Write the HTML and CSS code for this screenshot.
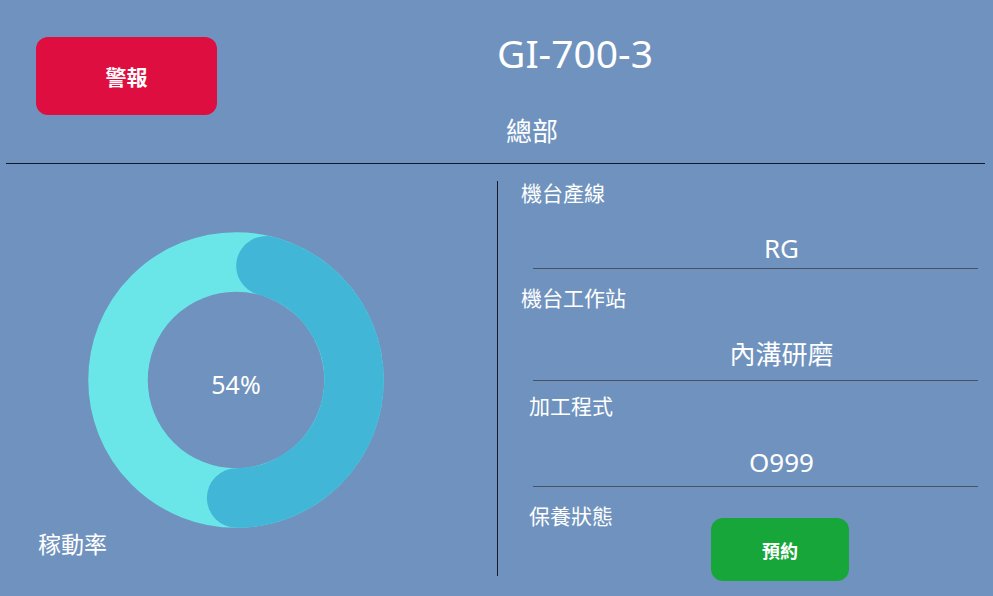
FILE: index.html
```html
<!DOCTYPE html>
<html lang="zh-Hant">
<head>
    <meta charset="UTF-8">
    <meta name="viewport" content="width=device-width, initial-scale=1.0">
    <title>GI-700-3</title>
    <link rel="stylesheet" href="styles.css">
</head>
<body>

<div id="machineCard">
    <!-- Header: alarm button + machine name -->
    <div class="card-header">
        <button type="button" class="alarm-btn">警報</button>
        <div class="title-block">
            <div class="machine-name">GI-700-3</div>
            <div class="machine-site">總部</div>
        </div>
    </div>

    <div class="card-body">
        <!-- Utilization donut -->
        <div class="util-panel">
            <div class="donut">
                <svg width="296" height="296" viewBox="0 0 296 296">
                    <circle cx="148" cy="148" r="118" fill="none" stroke="#6be6e8" stroke-width="59.5"/>
                    <path d="M177.95 33.86 A118 118 0 0 1 148.62 266" fill="none" stroke="#41b6d6" stroke-width="59.5" stroke-linecap="round"/>
                </svg>
                <span class="donut-value">54%</span>
            </div>
            <div class="util-label">稼動率</div>
        </div>

        <!-- Machine info -->
        <div class="info-panel">
            <div class="field field-line">
                <div class="field-label">機台產線</div>
                <div class="field-value">RG</div>
            </div>
            <div class="field field-station">
                <div class="field-label">機台工作站</div>
                <div class="field-value">內溝研磨</div>
            </div>
            <div class="field field-program">
                <div class="field-label">加工程式</div>
                <div class="field-value">O999</div>
            </div>
            <div class="field field-maint">
                <div class="field-label">保養狀態</div>
                <button type="button" class="book-btn">預約</button>
            </div>
        </div>
    </div>
</div>

</body>
</html>
```

FILE: styles.css
```css
body {
    margin: 0;
    padding: 0;
    background-color: #6f93be;
    font-family: "Noto Sans", "Noto Sans CJK TC", sans-serif;
    color: #ffffff;
    overflow: hidden;
}
#machineCard {
    width: 993px;
    height: 596px;
    display: flex;
    flex-direction: column;
}
.card-header {
    display: flex;
    flex-shrink: 0;
    height: 163px;
    margin: 0 8px 0 6px;
    border-bottom: 1px solid #141824;
}
.alarm-btn {
    width: 181px;
    height: 78px;
    margin: 37px 0 0 30px;
    background-color: #df0e40;
    color: #ffffff;
    border: none;
    border-radius: 12px;
    font-family: "Noto Sans CJK TC", sans-serif;
    font-size: 21px;
    font-weight: bold;
    cursor: pointer;
}
.title-block {
    margin-left: 280px;
    padding-top: 33px;
}
.machine-name {
    font-size: 39px;
    line-height: 39px;
}
.machine-site {
    margin: 46px 0 0 9px;
    font-size: 26px;
    line-height: 26px;
}
.card-body {
    display: flex;
    flex: 1;
    min-height: 0;
}
.util-panel {
    width: 459px;
    padding-left: 38px;
    display: flex;
    flex-direction: column;
}
.donut {
    position: relative;
    width: 296px;
    height: 296px;
    margin: 68px 0 0 50px;
}
.donut svg {
    display: block;
}
.donut-value {
    position: absolute;
    left: 0;
    right: 0;
    top: 136px;
    text-align: center;
    font-size: 25px;
    line-height: 32px;
}
.util-label {
    margin-top: 5px;
    font-size: 23px;
    line-height: 23px;
}
.info-panel {
    flex: 1;
    margin: 17px 0 20px 0;
    padding: 0 15px 0 23px;
    border-left: 1px solid #161a26;
}
.field-label {
    font-size: 21px;
    line-height: 24px;
}
.field-value {
    margin: 26px 0 0 12px;
    padding-left: 52px;
    text-align: center;
    font-size: 26px;
    line-height: 36px;
    border-bottom: 1px solid #4a5262;
}
.field-line .field-value {
    margin-top: 25px;
    padding-bottom: 2px;
}
.field-station {
    margin-top: 17px;
}
.field-station .field-value {
    padding-bottom: 8px;
}
.field-program {
    margin-top: 13px;
}
.field-program .field-label,
.field-maint .field-label {
    margin-left: 8px;
}
.field-program .field-value {
    padding-bottom: 6px;
}
.field-maint {
    display: flex;
    align-items: flex-start;
    margin-top: 17px;
}
.book-btn {
    flex-shrink: 0;
    width: 138px;
    height: 63px;
    margin: 14px 0 0 98px;
    background-color: #17a63a;
    color: #ffffff;
    border: none;
    border-radius: 12px;
    font-family: "Noto Sans CJK TC", sans-serif;
    font-size: 18px;
    font-weight: bold;
    cursor: pointer;
}
```
